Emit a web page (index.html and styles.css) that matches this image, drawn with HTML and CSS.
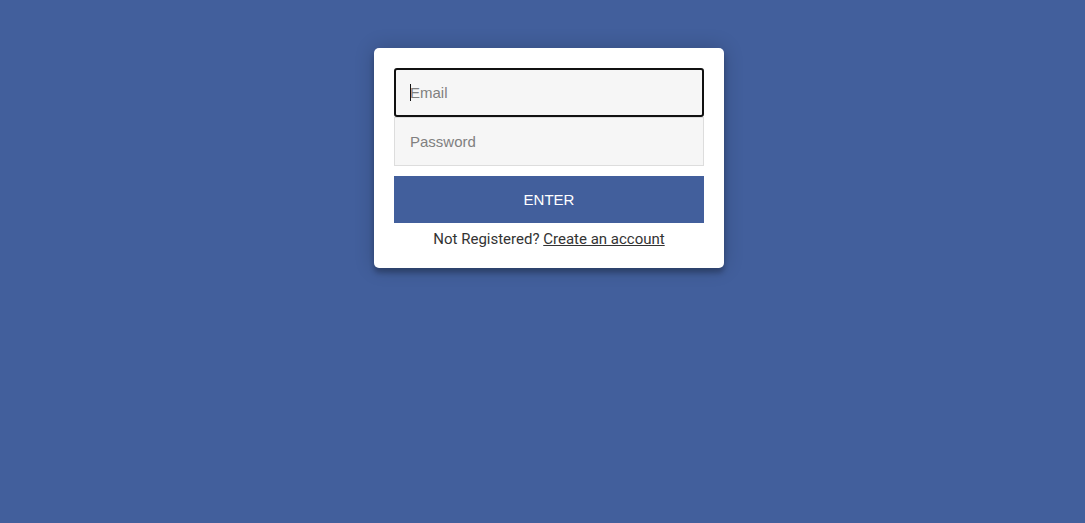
FILE: index.html
```html
<!DOCTYPE html>
<html>
<head>
<meta charset="utf-8">
<link rel="stylesheet" href="styles.css">
</head>
<body>
<div class="page">
  <form class="card">
    <div class="field-wrap">
      <input class="field field-focus" type="text" placeholder="Email">
      <span class="caret"></span>
    </div>
    <input class="field" type="password" placeholder="Password">
    <button class="btn" type="button">Enter</button>
    <p class="message">Not Registered? <a href="#">Create an account</a></p>
  </form>
</div>
</body>
</html>
```
FILE: styles.css
```css
html, body {
  margin: 0;
  padding: 0;
  background: #425f9c;
  height: 100%;
}
.page {
  display: flex;
  justify-content: center;
  padding-top: 48px;
  padding-left: 13px;
}
.card {
  width: 310px;
  background: #fff;
  padding: 20px;
  border-radius: 5px;
  box-shadow: 0 0 20px rgba(0,0,0,0.2), 0 5px 5px rgba(0,0,0,0.24);
  display: flex;
  flex-direction: column;
}
.field-wrap {
  position: relative;
  display: flex;
}
.caret {
  position: absolute;
  left: 16px;
  top: 16px;
  width: 1px;
  height: 17px;
  background: #111;
}
.field {
  box-sizing: border-box;
  width: 310px;
  height: 49px;
  margin: 0;
  padding: 0 15px;
  background: #f6f6f6;
  border: 1px solid #ddd;
  font-family: "Liberation Sans", Arial, sans-serif;
  font-size: 15px;
  color: #333;
  outline: none;
}
.field::placeholder {
  color: #808080;
}
.field-focus {
  border: 2px solid #111;
  border-radius: 3px;
  padding-left: 14px;
}
.btn {
  margin-top: 10px;
  height: 47px;
  border: 0;
  background: #425f9c;
  color: #fff;
  font-family: "Liberation Sans", Arial, sans-serif;
  font-size: 15px;
  text-transform: uppercase;
  cursor: pointer;
}
.message {
  margin: 7px 0 0;
  text-align: center;
  font-family: Roboto, "Noto Sans", sans-serif;
  font-size: 15px;
  line-height: 18px;
  color: #333;
}
.message a {
  color: #333;
  text-decoration: underline;
}
```
